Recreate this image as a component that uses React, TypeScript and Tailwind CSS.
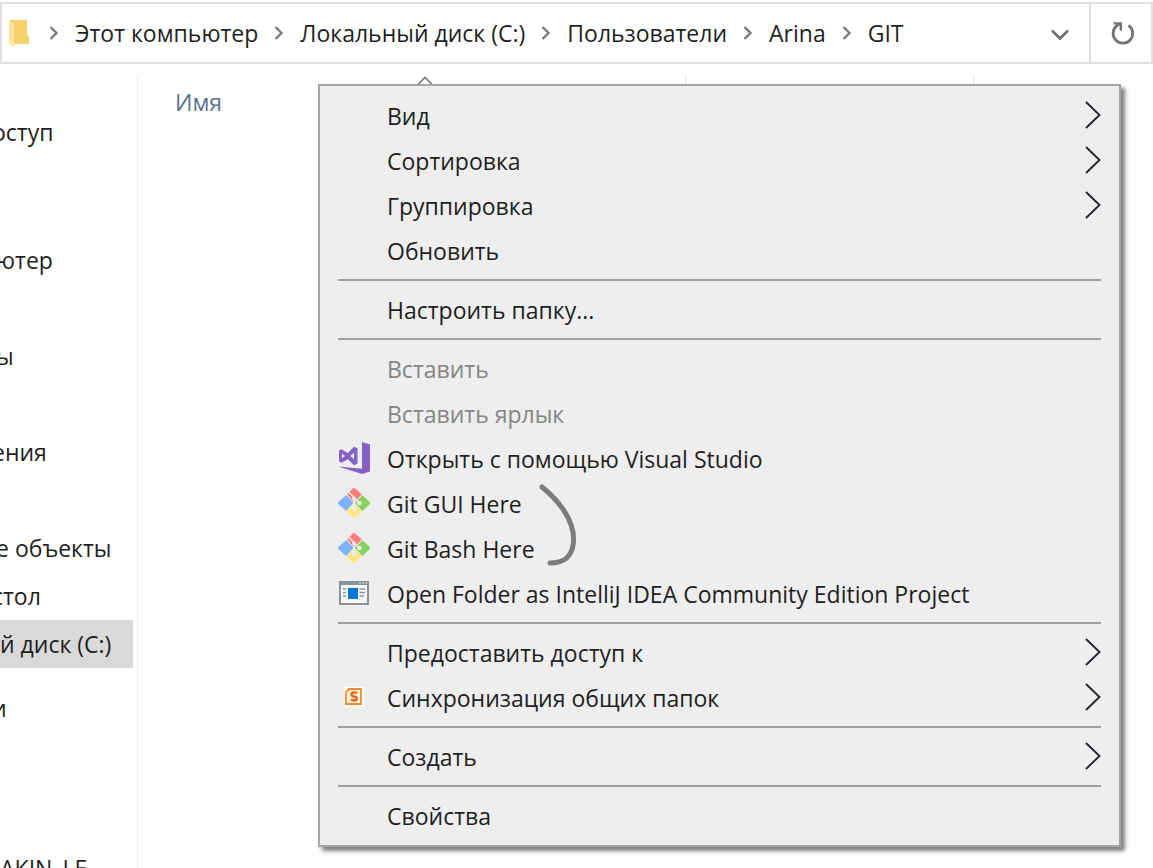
import { Fragment, type ReactNode } from "react";

function FolderIcon() {
  return (
    <svg width="20" height="28" viewBox="0 0 20 28" aria-hidden="true">
      <path d="M1 1h17v15l2 1v8H5L1 22z" fill="#f5d26b" />
      <path d="M0 2l6 3v19l-1 4-5-3z" fill="#ffe59b" />
      <path d="M6 5v19" stroke="#edc65b" strokeWidth="1" />
    </svg>
  );
}

function CrumbChevron() {
  return (
    <svg width="10" height="14" viewBox="0 0 10 14" fill="none" stroke="#7b7b7b" strokeWidth="2.4" aria-hidden="true">
      <path d="M1.5 1l6 6-6 6" />
    </svg>
  );
}

function DropChevron() {
  return (
    <svg width="18" height="12" viewBox="0 0 18 12" fill="none" stroke="#737373" strokeWidth="2.8" aria-hidden="true">
      <path d="M1 1.5l8 8 8-8" />
    </svg>
  );
}

function RefreshIcon() {
  return (
    <svg width="24" height="24" viewBox="0 0 24 24" fill="none" stroke="#737373" strokeWidth="2.8" aria-hidden="true">
      <path d="M17.6 4.4A9.8 9.8 0 1 1 5 5.4L9 2.6" />
      <path d="M2.500 2.4h7.300v7.4" strokeWidth="2.4" />
    </svg>
  );
}

function SubmenuChevron() {
  return (
    <svg width="16" height="28" viewBox="0 0 16 28" fill="none" stroke="#2a2430" strokeWidth="1.9" aria-hidden="true">
      <path d="M1 1l13.5 13L1 27" />
    </svg>
  );
}

function VisualStudioIcon() {
  return (
    <svg width="34" height="34" viewBox="0 0 34 34" aria-hidden="true">
      <path d="M25 1l8 2.500v27L25 33 1 25.500l24 2.200z" fill="#8661c5" />
      <path
        fillRule="evenodd"
        fill="#8661c5"
        d="M2 9.5l2.5-1.200 6.300 3.600 6.200-6.100 3.500 1.500v15.400l-3.500 1.500-6.200-6-6.300 3.600L2 20.300zM5 12.400v4.800L8 15zM13.400 15l3.700 3.300v-6.600z"
      />
    </svg>
  );
}

function GitIcon() {
  return (
    <svg width="34" height="34" viewBox="0 0 34 34" aria-hidden="true">
      <path d="M10.2 8.2l5-5.200q1.8-1.8 3.6 0l6 5.600-7.800 7.800z" fill="#ff7b7b" />
      <path d="M9.400 9l7.200 7.800L9.200 25l-7.400-6.400q-1.600-1.600 0-3.200z" fill="#80b3ff" />
      <path d="M25.400 9.300l7 6.200q1.500 1.500 0 3L25.400 25 17.8 17z" fill="#87d35f" />
      <path d="M17 17.800l7.600 7.800-6 5.600q-1.600 1.500-3.2 0L9.600 25.600z" fill="#ffe680" />
      <path d="M10.600 5l6.400 6.500v12M18 13l4.500 4" fill="none" stroke="#eeeeee" strokeWidth="1.500" />
      <circle cx="17" cy="12.500" r="1.900" fill="#eeeeee" />
      <circle cx="17" cy="23" r="2.2" fill="#eeeeee" />
      <circle cx="22.500" cy="17" r="2.3" fill="#eeeeee" />
    </svg>
  );
}

function WindowIcon() {
  return (
    <svg width="30" height="24" viewBox="0 0 30 24" aria-hidden="true">
      <rect x="1" y="1" width="28" height="22" fill="#f8f8f8" stroke="#8a9299" strokeWidth="2" />
      <path d="M1 2.5h28" stroke="#8a9299" strokeWidth="3" />
      <path d="M20 2h2M23 2h2M26 2h2" stroke="#e6e6e6" strokeWidth="1" />
      <rect x="9" y="7" width="10" height="11" fill="#0078d7" />
      <path d="M4 8h3M4 11.5h3M4 15h3M20.5 8H26M20.5 11.5H26M20.5 15H25" stroke="#8a9299" strokeWidth="1.3" />
    </svg>
  );
}

function SyncIcon() {
  return (
    <svg width="20" height="20" viewBox="0 0 20 20" aria-hidden="true">
      <rect width="20" height="20" fill="#fff" />
      <path d="M5 2h12v15H2V5z" fill="#fff3e0" stroke="#f28a2e" strokeWidth="1.8" />
      <path
        d="M13 6.2C11 5 7.4 5 7.4 7.4c0 2.6 5.4 1.6 5.4 4.2 0 2.3-3.8 2.3-6 .9"
        fill="none"
        stroke="#e2661a"
        strokeWidth="2.4"
      />
    </svg>
  );
}

type MenuItem = { label: string; icon?: ReactNode; submenu?: boolean; disabled?: boolean };

const groups: MenuItem[][] = [
  [
    { label: "Вид", submenu: true },
    { label: "Сортировка", submenu: true },
    { label: "Группировка", submenu: true },
    { label: "Обновить" },
  ],
  [{ label: "Настроить папку..." }],
  [
    { label: "Вставить", disabled: true },
    { label: "Вставить ярлык", disabled: true },
    { label: "Открыть с помощью Visual Studio", icon: <VisualStudioIcon /> },
    { label: "Git GUI Here", icon: <GitIcon /> },
    { label: "Git Bash Here", icon: <GitIcon /> },
    { label: "Open Folder as IntelliJ IDEA Community Edition Project", icon: <WindowIcon /> },
  ],
  [
    { label: "Предоставить доступ к", submenu: true },
    { label: "Синхронизация общих папок", icon: <SyncIcon />, submenu: true },
  ],
  [{ label: "Создать", submenu: true }],
  [{ label: "Свойства" }],
];

const crumbs = ["Этот компьютер", "Локальный диск (C:)", "Пользователи", "Arina", "GIT"];

const places: { label: string; space: string; shift: string; selected?: boolean }[] = [
  { label: "оступ", space: "mt-0", shift: "-ml-2" },
  { label: "ютер", space: "mt-20", shift: "-ml-1" },
  { label: "ы", space: "mt-12", shift: "-ml-1" },
  { label: "ения", space: "mt-12", shift: "-ml-2" },
  { label: "е объекты", space: "mt-12", shift: "-ml-1" },
  { label: "стол", space: "mt-0", shift: "-ml-2" },
  { label: "й диск (C:)", space: "mt-0", shift: "ml-0", selected: true },
  { label: "и", space: "mt-4", shift: "-ml-2" },
  { label: "AKIN_LE", space: "mt-28", shift: "ml-0" },
];

function AddressBar() {
  return (
    <header className="mt-[2px] flex h-[62px] shrink-0 items-stretch border-2 border-[#e0e0e0]">
      <nav className="flex grow items-center pl-[7px]" aria-label="Путь">
        <span className="mr-1">
          <FolderIcon />
        </span>
        {crumbs.map((crumb) => (
          <Fragment key={crumb}>
            <span className="flex w-[42px] shrink-0 justify-center">
              <CrumbChevron />
            </span>
            <a href="#" className="whitespace-nowrap">
              {crumb}
            </a>
          </Fragment>
        ))}
      </nav>
      <button type="button" aria-label="Предыдущие расположения" className="flex w-[58px] items-center justify-center pt-1">
        <DropChevron />
      </button>
      <button
        type="button"
        aria-label="Обновить"
        className="flex w-[62px] items-center justify-center border-l-2 border-[#e0e0e0] pl-1"
      >
        <RefreshIcon />
      </button>
    </header>
  );
}

function ContextMenu() {
  return (
    <div
      role="menu"
      className="absolute top-[84px] right-8 left-[318px] border-2 border-[#a5a5a5] bg-[#eeeeee] pt-[7px] pb-[7px] shadow-[4px_4px_4px_#00000080]"
    >
      {groups.map((group, index) => (
        <Fragment key={group[0].label}>
          {index > 0 && <div role="separator" className="mx-[18px] my-[6px] h-[2px] bg-[#a0a0a0]" />}
          {group.map((item) => (
            <button
              key={item.label}
              type="button"
              role="menuitem"
              disabled={item.disabled}
              className="flex h-[45px] w-full items-center pr-[18px] pl-[17px] text-left text-[#1f1f1f] disabled:text-[#858585]"
            >
              <span className="flex w-[34px] shrink-0 justify-center pb-[2px]">{item.icon}</span>
              <span className="grow pl-4 whitespace-nowrap">{item.label}</span>
              {item.submenu && (
                <span className="pb-[2px]">
                  <SubmenuChevron />
                </span>
              )}
            </button>
          ))}
        </Fragment>
      ))}
      <svg
        className="absolute top-[396px] left-[218px]"
        width="44"
        height="88"
        viewBox="0 0 44 88"
        fill="none"
        stroke="#7c7c7c"
        strokeLinecap="round"
        aria-hidden="true"
      >
        <path d="M4 5C20 18 37 38 35.500 60C34 76 25 81 12 81" strokeWidth="5" />
      </svg>
    </div>
  );
}

export default function App() {
  return (
    <div className="relative flex h-screen flex-col overflow-hidden bg-white font-['Open_Sans','Noto_Sans',sans-serif] text-[23px] leading-[32px] text-[#1f1f1f]">
      <AddressBar />
      <main className="mt-3 flex min-h-0 grow">
        <aside className="w-[138px] shrink-0 overflow-hidden border-r border-[#f0f0f0] pt-8 pr-1">
          {places.map((place) => (
            <div key={place.label} className={place.space}>
              <a
                href="#"
                className={
                  place.selected
                    ? "flex h-12 items-center bg-[#d9d9d9] whitespace-nowrap"
                    : "flex h-12 items-center whitespace-nowrap"
                }
              >
                <span className={place.shift}>{place.label}</span>
              </a>
            </div>
          ))}
        </aside>
        <section className="flex h-[52px] grow items-center text-[#5a738c]">
          <div className="relative flex h-full w-[548px] items-center border-r border-[#dcdcdc] pl-[37px]">
            Имя
            <svg
              className="absolute top-0 left-[279px]"
              width="16"
              height="9"
              viewBox="0 0 16 9"
              fill="none"
              stroke="#777777"
              strokeWidth="1.6"
              aria-hidden="true"
            >
              <path d="M1 8.500l7-7 7 7" />
            </svg>
          </div>
          <div className="h-full w-72 border-r border-[#dcdcdc]" />
        </section>
      </main>
      <ContextMenu />
    </div>
  );
}
